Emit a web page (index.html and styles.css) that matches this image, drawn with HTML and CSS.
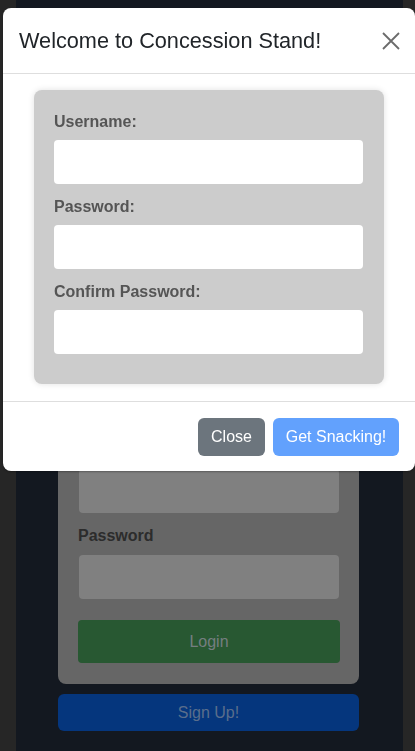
FILE: index.html
```html
<!DOCTYPE html>
<html>
<head>
<meta charset="utf-8">
<link rel="stylesheet" href="styles.css">
</head>
<body>
<div class="page">
  <div class="login-card">
    <label class="bg-label">Username</label>
    <div class="bg-input"></div>
    <label class="bg-label">Password</label>
    <div class="bg-input"></div>
    <div class="bg-login">Login</div>
  </div>
  <div class="bg-signup">Sign Up!</div>
</div>

<div class="modal">
  <div class="dialog">
    <div class="modal-header">
      <h5 class="modal-title">Welcome to Concession Stand!</h5>
      <svg class="close-x" width="18" height="18" viewBox="0 0 18 18"><path d="M1 1L17 17M17 1L1 17" stroke="#6b6b6b" stroke-width="1.8" fill="none"/></svg>
    </div>
    <div class="modal-body">
      <div class="form-card">
        <label class="f-label">Username:</label>
        <div class="f-input"></div>
        <label class="f-label">Password:</label>
        <div class="f-input"></div>
        <label class="f-label">Confirm Password:</label>
        <div class="f-input"></div>
      </div>
    </div>
    <div class="modal-footer">
      <button class="btn btn-close">Close</button>
      <button class="btn btn-primary">Get Snacking!</button>
    </div>
  </div>
</div>
</body>
</html>
```
FILE: styles.css
```css
html, body { margin: 0; padding: 0; }
body {
  background: #262626;
  font-family: "Liberation Sans", Arial, sans-serif;
  height: 751px;
  overflow: hidden;
}
.page {
  margin: 0 12px 0 16px;
  background: #131820;
  height: 751px;
  padding-top: 419px;
  box-sizing: border-box;
}
.login-card {
  width: 301px;
  margin-left: 42px;
  background: #666666;
  border-radius: 8px;
  padding: 21px 20px 21px 20px;
  box-sizing: border-box;
  display: flex;
  flex-direction: column;
}
.bg-label {
  font-weight: bold;
  font-size: 16px;
  color: #2c2c2c;
  height: 19px;
  line-height: 19px;
  margin-bottom: 10px;
  flex: none;
}
.bg-input {
  height: 44px;
  background: #808080;
  border-radius: 4px;
  margin: 0 0 13px 1px;
  width: 260px;
  flex: none;
}
.bg-input + .bg-label + .bg-input { margin-bottom: 21px; }
.bg-login {
  height: 43px;
  background: #285832;
  border-radius: 4px;
  color: #757e80;
  font-size: 16px;
  display: flex;
  align-items: center;
  justify-content: center;
  width: 262px;
  flex: none;
}
.bg-signup {
  width: 301px;
  margin: 10px 0 0 42px;
  height: 37px;
  background: #05367d;
  border-radius: 6px;
  color: #5a6e8c;
  font-size: 16px;
  display: flex;
  align-items: center;
  justify-content: center;
}

.modal {
  position: fixed;
  left: 0; top: 0; right: 0; bottom: 0;
}
.dialog {
  position: absolute;
  left: 3px;
  top: 8px;
  width: 412px;
  height: 463px;
  background: #fff;
  border-radius: 8px;
  box-sizing: border-box;
  display: flex;
  flex-direction: column;
  box-shadow: 0 1px 2px rgba(0,0,0,0.3);
}
.modal-header {
  height: 65px;
  border-bottom: 1px solid #dedede;
  display: flex;
  align-items: center;
  justify-content: space-between;
  padding: 0 15px 0 16px;
  flex: none;
}
.modal-title {
  margin: 0;
  font-weight: normal;
  font-size: 21.7px;
  color: #212529;
}
.modal-body {
  padding: 16px 31px 17px 31px;
  border-bottom: 1px solid #dedede;
  flex: none;
}
.form-card {
  background: #cccccc;
  border-radius: 8px;
  box-shadow: 0 0 6px rgba(0,0,0,0.12);
  padding: 22px 21px 30px 20px;
  display: flex;
  flex-direction: column;
}
.f-label {
  font-weight: bold;
  font-size: 16px;
  color: #555;
  height: 19px;
  line-height: 19px;
  margin-bottom: 9px;
  flex: none;
}
.f-input {
  height: 44px;
  background: #fff;
  border-radius: 4px;
  margin-bottom: 13px;
  flex: none;
}
.f-input:last-child { margin-bottom: 0; }
.modal-footer {
  flex: 1;
  display: flex;
  justify-content: flex-end;
  align-items: flex-start;
  padding: 16px 16px 0 0;
  gap: 8px;
}
.btn {
  border: none;
  height: 38px;
  border-radius: 6px;
  color: #fff;
  font-family: "Liberation Sans", Arial, sans-serif;
  font-size: 16px;
  padding: 0 12px;
}
.btn-close { background: #6c757d; width: 67px; }
.btn-primary { background: #62a1fd; width: 126px; }
```
